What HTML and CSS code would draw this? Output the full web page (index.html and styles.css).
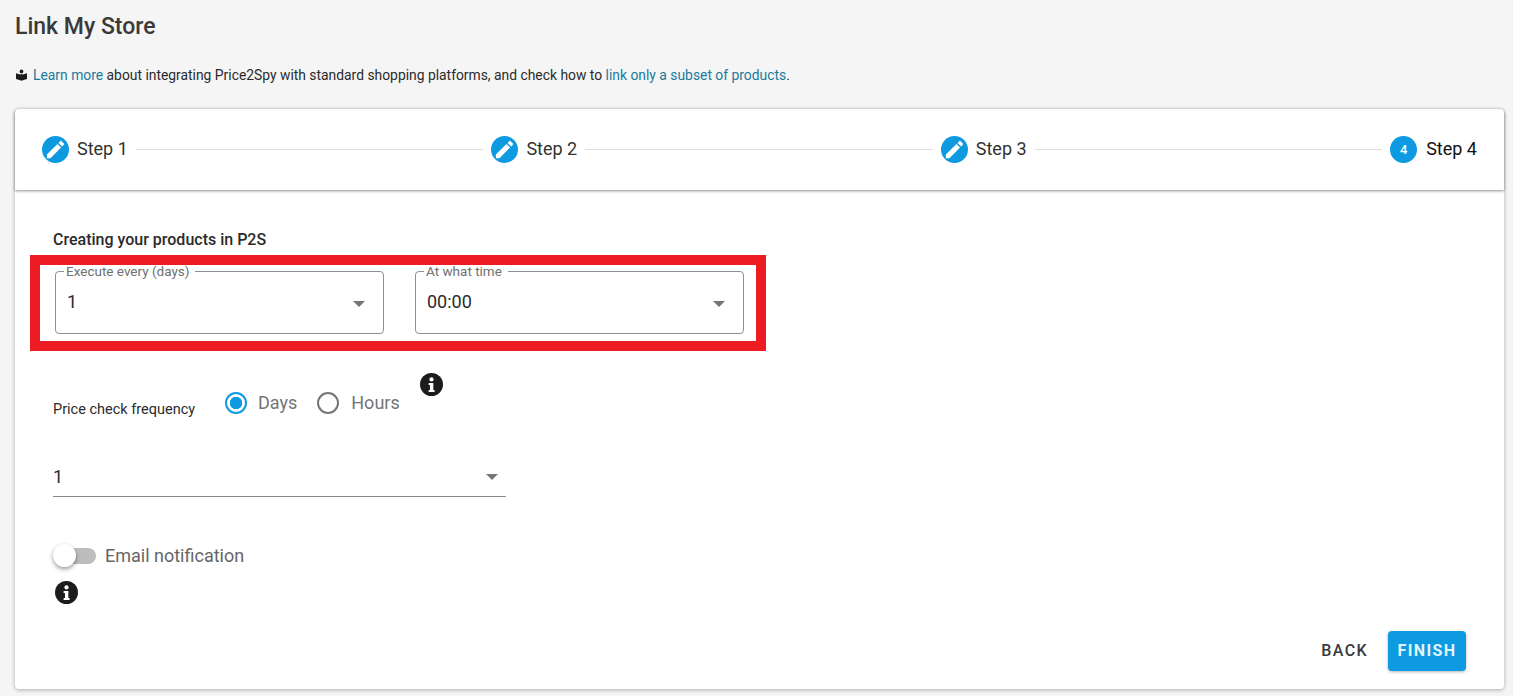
FILE: index.html
```html
<!DOCTYPE html>
<html lang="en">
<head>
<meta charset="utf-8">
<title>Link My Store</title>
<link rel="stylesheet" href="styles.css">
</head>
<body>
<svg class="defs" width="0" height="0" aria-hidden="true">
  <symbol id="pencil" viewBox="0 0 24 24"><path d="M3 17.25V21h3.75L17.81 9.94l-3.75-3.75L3 17.25zM20.71 7.04c.39-.39.39-1.02 0-1.41l-2.34-2.34c-.39-.39-1.02-.39-1.41 0l-1.83 1.83 3.75 3.75 1.83-1.83z"/></symbol>
  <symbol id="info" viewBox="0 0 24 24"><circle cx="12" cy="12" r="12" fill="#1c1c1c"/><circle cx="12" cy="6.7" r="2.2" fill="#fff"/><path d="M9 10.4h4.9v7.3h1.3v2H9v-2h1.4v-5.3H9z" fill="#fff"/></symbol>
</svg>
<h1 class="title">Link My Store</h1>
<p class="intro"><svg class="book" viewBox="0 0 12 12"><circle cx="6" cy="2.1" r="2"/><path d="M0 4.2l5.5 1.6V12L0 10.4zM12 4.2L6.5 5.8V12l5.5-1.6z"/><path d="M5 5h2v7H5z"/></svg><a href="#">Learn more</a> about integrating Price2Spy with standard shopping platforms, and check how to <a href="#">link only a subset of products</a>.</p>
<main class="card">
  <header class="stepper">
    <div class="step"><span class="badge"><svg class="pencil"><use href="#pencil"/></svg></span><span class="step-name">Step 1</span></div>
    <div class="line"></div>
    <div class="step"><span class="badge"><svg class="pencil"><use href="#pencil"/></svg></span><span class="step-name">Step 2</span></div>
    <div class="line"></div>
    <div class="step"><span class="badge"><svg class="pencil"><use href="#pencil"/></svg></span><span class="step-name">Step 3</span></div>
    <div class="line"></div>
    <div class="step current"><span class="badge">4</span><span class="step-name">Step 4</span></div>
  </header>
  <section class="body">
    <h2 class="heading">Creating your products in P2S</h2>
    <div class="highlight">
      <fieldset class="field">
        <legend>Execute every (days)</legend>
        <span class="value">1</span><span class="arrow"></span>
      </fieldset>
      <fieldset class="field">
        <legend>At what time</legend>
        <span class="value">00:00</span><span class="arrow"></span>
      </fieldset>
    </div>
    <div class="frequency">
      <span class="freq-label">Price check frequency</span>
      <span class="radio on"></span><span class="radio-text">Days</span>
      <span class="radio"></span><span class="radio-text">Hours</span>
      <svg class="info info-top"><use href="#info"/></svg>
    </div>
    <div class="select"><span>1</span><span class="arrow"></span></div>
    <div class="toggle-row">
      <span class="track"><span class="thumb"></span></span>
      <span class="toggle-text">Email notification</span>
    </div>
    <svg class="info info-bottom"><use href="#info"/></svg>
    <div class="actions">
      <button class="btn back" type="button">Back</button>
      <button class="btn finish" type="button">Finish</button>
    </div>
  </section>
</main>
</body>
</html>
```
FILE: styles.css
```css
* { box-sizing: border-box; }
html, body { height: 100%; }
body {
  margin: 0;
  background: #f5f5f5;
  font-family: Roboto, "Liberation Sans", sans-serif;
  color: #2b2b2b;
  overflow: hidden;
}
.defs { position: absolute; }
.title {
  margin: 0;
  padding: 14px 0 0 15px;
  font-size: 23px;
  line-height: 26px;
  font-weight: 500;
  color: #3a3a3a;
}
.intro {
  margin: 26px 0 0;
  padding-left: 16px;
  height: 17px;
  font-size: 13.87px;
  line-height: 18px;
  color: #2b2b2b;
  white-space: nowrap;
}
.intro a { color: #1a7a9e; text-decoration: none; }
.book { width: 11px; height: 12px; margin-right: 6px; fill: #1c1c1c; vertical-align: -1px; }
.card {
  margin: 26px 9px 0 15px;
  height: 580px;
  background: #fff;
  border-radius: 4px;
  box-shadow: 0 1px 4px rgba(0,0,0,.3);
}
.stepper {
  display: flex;
  align-items: center;
  height: 81px;
  padding: 0 27px 1px;
  box-shadow: 0 1px 3px rgba(0,0,0,.45);
  border-radius: 4px 4px 0 0;
}
.step {
  display: flex;
  align-items: center;
  gap: 8px;
  font-size: 18px;
  color: #333;
  flex: none;
}
.step-name { margin-bottom: 2px; }
.step.current { color: #111; gap: 9px; }
.badge {
  width: 27px;
  height: 27px;
  border-radius: 50%;
  background: #0e9ae0;
  color: #fff;
  font-size: 13px;
  font-weight: 500;
  display: flex;
  align-items: center;
  justify-content: center;
}
.pencil { width: 23px; height: 23px; fill: #fff; }
.line { flex: 1; height: 1px; background: #dedede; margin: 0 8px; }
.body { padding: 40px 38px 0; }
.heading {
  margin: 0;
  font-size: 16px;
  line-height: 19px;
  font-weight: 500;
  color: #2b2b2b;
}
.highlight {
  display: flex;
  gap: 31px;
  width: 736px;
  height: 96px;
  margin: 6px 0 0 -23px;
  padding: 0 12px 7px 15px;
  border: 10px solid #ed1c24;
}
.field {
  position: relative;
  flex: 1;
  margin: 0;
  min-width: 0;
  padding: 0 11px;
  border: 1px solid #8f8f8f;
  border-radius: 4px;
  display: block;
}
.field legend {
  margin-left: -3px;
  padding: 0 6px 0 2px;
  font-size: 13.5px;
  line-height: 13px;
  color: #6f6f6f;
}
.value {
  display: block;
  font-size: 18px;
  line-height: 22px;
  margin-top: 13px;
  color: #2b2b2b;
}
.arrow {
  width: 0;
  height: 0;
  border-left: 6px solid transparent;
  border-right: 6px solid transparent;
  border-top: 6px solid #757575;
}
.field .arrow { position: absolute; right: 18px; top: 23px; }
.frequency {
  display: flex;
  align-items: center;
  height: 24px;
  margin-top: 40px;
}
.freq-label { font-size: 14.5px; line-height: 17px; margin: 12px 30px 0 0; width: 142px; white-space: nowrap; }
.radio {
  width: 22px;
  height: 22px;
  border: 2px solid #757575;
  border-radius: 50%;
  flex: none;
}
.radio.on {
  border-color: #0e9ae0;
  background: radial-gradient(circle, #0e9ae0 0 6px, transparent 6.5px);
}
.radio-text { font-size: 18px; color: #757575; margin: -2px 20px 0 11px; }
.radio + .radio-text + .radio + .radio-text { margin: -2px 20px 0 12px; }
.info { width: 23px; height: 23px; display: block; flex: none; }
.info-top { margin-top: -38px; }
.select {
  display: flex;
  justify-content: space-between;
  align-items: center;
  width: 453px;
  height: 34px;
  margin-top: 48px;
  padding: 0 8px 6px 0;
  border-bottom: 1px solid #8a8a8a;
  font-size: 18px;
  color: #2b2b2b;
}
.toggle-row {
  display: flex;
  align-items: center;
  height: 24px;
  margin-top: 47px;
}
.track {
  position: relative;
  width: 36px;
  height: 16px;
  margin-left: 7px;
  border-radius: 8px;
  background: #bdbdbd;
}
.thumb {
  position: absolute;
  left: -7px;
  top: -4px;
  width: 23px;
  height: 23px;
  border-radius: 50%;
  background: #fff;
  box-shadow: 0 2px 4px rgba(0,0,0,.4);
}
.toggle-text { font-size: 18px; color: #666; margin: -2px 0 0 9px; }
.info-bottom { margin: 13px 0 0 2px; }
.actions {
  display: flex;
  justify-content: flex-end;
  align-items: center;
  gap: 20px;
  height: 40px;
  margin-top: 27px;
}
.btn {
  border: 0;
  font-family: inherit;
  font-size: 16px;
  font-weight: 500;
  letter-spacing: 1.4px;
  text-transform: uppercase;
  background: none;
  padding: 0 0 2px;
}
.back { color: #3a3a3a; }
.finish {
  width: 78px;
  height: 40px;
  color: #e3f4fd;
  font-weight: 700;
  background: #0e9ae0;
  border-radius: 4px;
  box-shadow: 0 1px 3px rgba(0,0,0,.3);
}
```
